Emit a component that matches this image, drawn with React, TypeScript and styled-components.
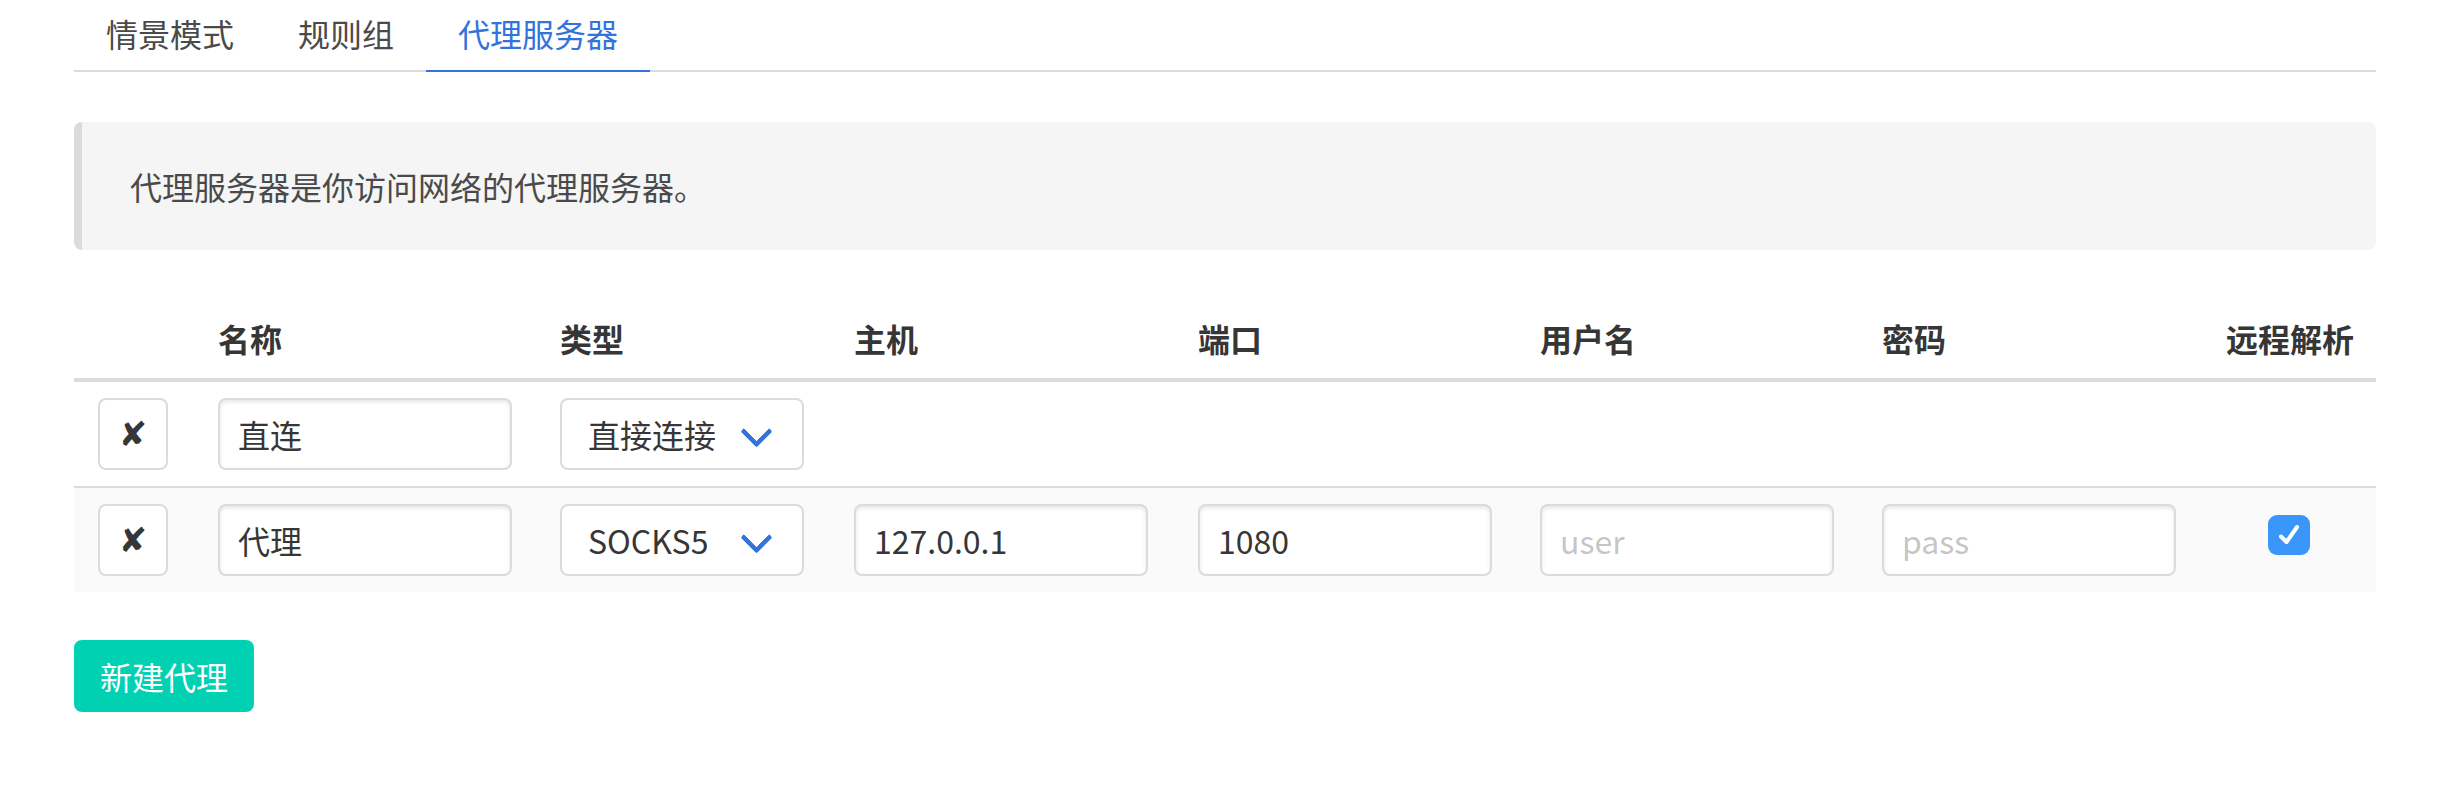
import React from "react";
import styled, { createGlobalStyle } from "styled-components";

const GlobalStyle = createGlobalStyle`
  html, body { margin: 0; padding: 0; background: #ffffff; }
  body {
    font-family: "Noto Sans CJK SC", "Noto Sans", sans-serif;
    font-size: 32px;
    line-height: 48px;
    color: #4a4a4a;
  }
  * { box-sizing: border-box; }
`;

const Page = styled.div`
  padding: 0 62px 0 74px;
`;

const TabList = styled.ul`
  display: flex;
  margin: 0;
  padding: 0;
  list-style: none;
  border-bottom: 2px solid #dbdbdb;
`;

const TabItem = styled.li`
  display: block;
`;

const TabLink = styled.a<{ $active?: boolean }>`
  display: block;
  padding: 9px 32px 13px;
  line-height: 48px;
  margin-bottom: -2px;
  border-bottom: 2px solid ${(p) => (p.$active ? "#3273dc" : "transparent")};
  color: ${(p) => (p.$active ? "#3273dc" : "#4a4a4a")};
  text-decoration: none;
  cursor: pointer;
`;

const Message = styled.div`
  margin-top: 50px;
  background: #f5f5f5;
  border-left: 8px solid #dbdbdb;
  border-radius: 8px;
  padding: 40px 48px;
  color: #4a4a4a;
`;

const Table = styled.table`
  margin-top: 48px;
  width: 2302px;
  table-layout: fixed;
  border-collapse: collapse;
  border-spacing: 0;
`;

const Th = styled.th<{ $w: number }>`
  width: ${(p) => p.$w}px;
  padding: 16px 24px;
  text-align: left;
  font-weight: 700;
  color: #363636;
  line-height: 48px;
  border-bottom: 4px solid #dbdbdb;
  white-space: nowrap;
`;

const Row = styled.tr<{ $striped?: boolean }>`
  background: ${(p) => (p.$striped ? "#fafafa" : "#ffffff")};
  &:not(:last-child) td {
    border-bottom: 2px solid #dbdbdb;
  }
`;

const Td = styled.td<{ $center?: boolean }>`
  padding: 16px 24px;
  vertical-align: top;
  text-align: ${(p) => (p.$center ? "center" : "left")};
  height: 104px;
`;

const DeleteButton = styled.button`
  width: 70px;
  height: 72px;
  border: 2px solid #dbdbdb;
  border-radius: 8px;
  background: #ffffff;
  color: #363636;
  font-family: "DejaVu Sans", sans-serif;
  font-size: 34px;
  font-weight: 700;
  display: flex;
  align-items: center;
  justify-content: center;
  padding: 0;
  cursor: pointer;
`;

const TextInput = styled.input`
  display: block;
  width: 294px;
  height: 72px;
  border: 2px solid #dbdbdb;
  border-radius: 8px;
  box-shadow: inset 0 2px 4px rgba(10, 10, 10, 0.1);
  background: #ffffff;
  color: #363636;
  font-family: "Noto Sans CJK SC", "Noto Sans", sans-serif;
  font-size: 32px;
  line-height: 48px;
  padding: 10px 18px;
  outline: none;
  &::placeholder {
    color: rgba(54, 54, 54, 0.3);
  }
`;

const SelectWrap = styled.div`
  position: relative;
  width: 244px;
  height: 72px;
  &::after {
    content: "";
    position: absolute;
    top: 50%;
    right: 36px;
    width: 18px;
    height: 18px;
    margin-top: -14px;
    border: 5px solid #3273dc;
    border-radius: 3px;
    border-right: 0;
    border-top: 0;
    transform: rotate(-45deg);
    pointer-events: none;
  }
`;

const Select = styled.select`
  appearance: none;
  -webkit-appearance: none;
  display: block;
  width: 244px;
  height: 72px;
  border: 2px solid #dbdbdb;
  border-radius: 8px;
  background: #ffffff;
  color: #363636;
  font-family: "Noto Sans CJK SC", "Noto Sans", sans-serif;
  font-size: 32px;
  line-height: 48px;
  padding: 10px 80px 10px 26px;
  outline: none;
`;

const CheckWrap = styled.div`
  display: flex;
  justify-content: center;
  align-items: flex-start;
  height: 72px;
  padding-top: 11px;
`;

const CheckBox = styled.span`
  display: flex;
  align-items: center;
  justify-content: center;
  width: 42px;
  height: 40px;
  border-radius: 9px;
  background: #3a96f8;
`;

const AddButton = styled.button`
  margin-top: 48px;
  height: 72px;
  padding: 0 24px;
  border: 2px solid transparent;
  border-radius: 8px;
  background: #00d1b2;
  color: #ffffff;
  font-family: "Noto Sans CJK SC", "Noto Sans", sans-serif;
  font-size: 32px;
  line-height: 48px;
  cursor: pointer;
`;

const cols = [
  { label: "", w: 120 },
  { label: "名称", w: 342 },
  { label: "类型", w: 294 },
  { label: "主机", w: 344 },
  { label: "端口", w: 342 },
  { label: "用户名", w: 342 },
  { label: "密码", w: 344 },
  { label: "远程解析", w: 174 },
];

export default function App() {
  return (
    <>
      <GlobalStyle />
      <Page>
        <TabList>
          <TabItem>
            <TabLink>情景模式</TabLink>
          </TabItem>
          <TabItem>
            <TabLink>规则组</TabLink>
          </TabItem>
          <TabItem>
            <TabLink $active>代理服务器</TabLink>
          </TabItem>
        </TabList>

        <Message>代理服务器是你访问网络的代理服务器。</Message>

        <Table>
          <thead>
            <tr>
              {cols.map((c, i) => (
                <Th key={i} $w={c.w}>
                  {c.label}
                </Th>
              ))}
            </tr>
          </thead>
          <tbody>
            <Row>
              <Td>
                <DeleteButton>✘</DeleteButton>
              </Td>
              <Td>
                <TextInput defaultValue="直连" />
              </Td>
              <Td>
                <SelectWrap>
                  <Select defaultValue="direct">
                    <option value="direct">直接连接</option>
                    <option value="socks5">SOCKS5</option>
                  </Select>
                </SelectWrap>
              </Td>
              <Td />
              <Td />
              <Td />
              <Td />
              <Td />
            </Row>
            <Row $striped>
              <Td>
                <DeleteButton>✘</DeleteButton>
              </Td>
              <Td>
                <TextInput defaultValue="代理" />
              </Td>
              <Td>
                <SelectWrap>
                  <Select defaultValue="socks5">
                    <option value="direct">直接连接</option>
                    <option value="socks5">SOCKS5</option>
                  </Select>
                </SelectWrap>
              </Td>
              <Td>
                <TextInput defaultValue="127.0.0.1" />
              </Td>
              <Td>
                <TextInput defaultValue="1080" />
              </Td>
              <Td>
                <TextInput placeholder="user" />
              </Td>
              <Td>
                <TextInput placeholder="pass" type="password" />
              </Td>
              <Td $center>
                <CheckWrap>
                  <CheckBox>
                    <svg width="26" height="26" viewBox="0 0 26 26">
                      <path
                        d="M5 14.5 L10.5 20 L21 5"
                        fill="none"
                        stroke="#ffffff"
                        strokeWidth="4"
                        strokeLinecap="round"
                        strokeLinejoin="round"
                      />
                    </svg>
                  </CheckBox>
                </CheckWrap>
              </Td>
            </Row>
          </tbody>
        </Table>

        <AddButton>新建代理</AddButton>
      </Page>
    </>
  );
}
